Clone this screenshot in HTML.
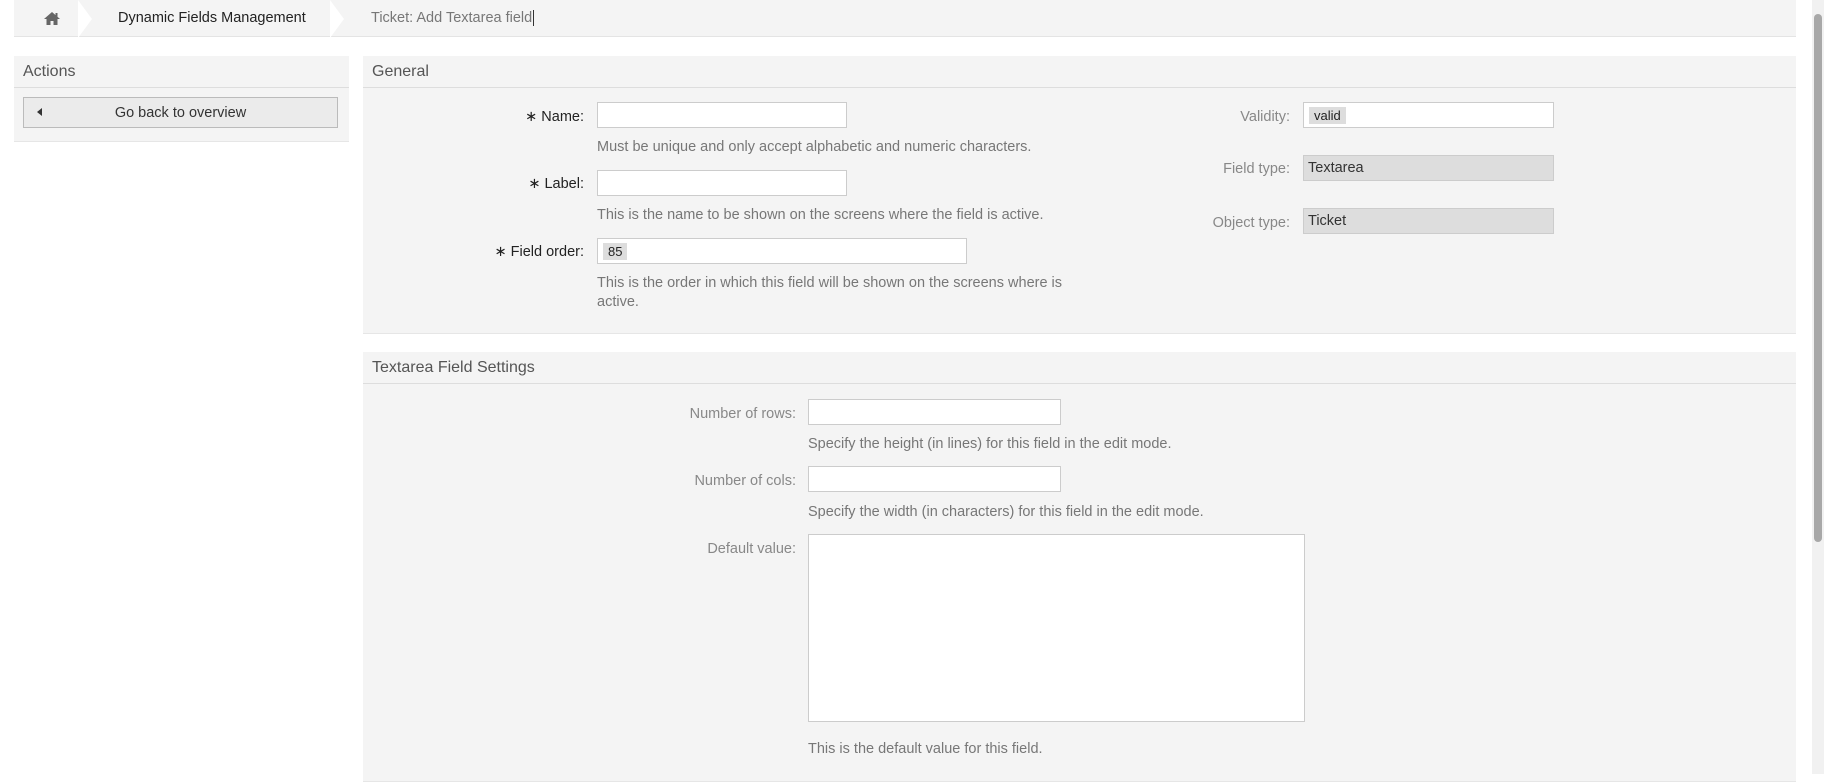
<!DOCTYPE html>
<html><head><meta charset="utf-8"><style>
*{box-sizing:border-box;margin:0;padding:0}
body{width:1824px;height:774px;overflow:hidden;background:#fff;font-family:"Liberation Sans",Arial,sans-serif;font-size:14.5px;color:#333;position:relative}
.abs{position:absolute}
.bc{left:14px;top:0;width:1782px;height:37px;background:#f4f4f4;border-bottom:1px solid #e4e4e4}
.chev{position:absolute;top:0;width:0;height:0;border-top:19px solid transparent;border-bottom:19px solid transparent;border-left:14px solid #fff}
.box{background:#f4f4f4;border-bottom:1px solid #e6e6e6}
.hd{position:absolute;left:0;right:0;top:0;height:32px;border-bottom:1px solid #ddd;font-size:16px;color:#555;padding:7px 9px}
.lbl{position:absolute;text-align:right;color:#888;font-size:14.5px;white-space:nowrap}
.req{color:#222}
.inp{position:absolute;background:#fff;border:1px solid #ccc;height:26px}
.ro{background:#ddd}
.help{position:absolute;color:#777;font-size:14.5px;line-height:19px}
.tag{position:absolute;left:5px;top:4px;background:#ddd;padding:1px 5px;font-size:13px;color:#222}
</style></head><body>
<div class="abs bc">
 <svg class="abs" style="left:29px;top:11px" width="18" height="15" viewBox="0 0 18 15"><path d="M9 1L1 8h2.5v6h4v-4h3v4h4V8H17z" fill="#666"/><rect x="12.5" y="2" width="2" height="4" fill="#666"/></svg>
 <div class="chev" style="left:64px"></div>
 <div class="abs" style="left:104px;top:10px;color:#222">Dynamic Fields Management</div>
 <div class="chev" style="left:316px"></div>
 <div class="abs" style="left:357px;top:10px;color:#777">Ticket: Add Textarea field<span style="border-left:1px solid #333;margin-left:1px"></span></div>
</div>
<div class="abs" style="left:1812px;top:0;width:12px;height:774px;background:#f1f1f1"><div style="margin:14px 2px;width:8px;height:528px;background:#a8a8a8;border-radius:4px"></div></div>

<div class="abs box" style="left:14px;top:56px;width:335px;height:86px">
 <div class="hd">Actions</div>
 <div class="abs" style="left:9px;top:41px;width:315px;height:31px;background:#ebebeb;border:1px solid #bbb;text-align:center;padding-top:7px;color:#333">Go back to overview</div>
 <div class="abs" style="left:23px;top:52px;width:0;height:0;border-top:4px solid transparent;border-bottom:4px solid transparent;border-right:5px solid #333"></div>
</div>

<div class="abs box" style="left:363px;top:56px;width:1433px;height:278px">
 <div class="hd">General</div>
 <div class="lbl req" style="right:1212px;top:53px">&#x2217; Name:</div>
 <div class="inp" style="left:234px;top:46px;width:250px"></div>
 <div class="help" style="left:234px;top:82px">Must be unique and only accept alphabetic and numeric characters.</div>
 <div class="lbl req" style="right:1212px;top:120px">&#x2217; Label:</div>
 <div class="inp" style="left:234px;top:114px;width:250px"></div>
 <div class="help" style="left:234px;top:150px">This is the name to be shown on the screens where the field is active.</div>
 <div class="lbl req" style="right:1212px;top:188px">&#x2217; Field order:</div>
 <div class="inp" style="left:234px;top:182px;width:370px"><span class="tag">85</span></div>
 <div class="help" style="left:234px;top:218px;width:484px">This is the order in which this field will be shown on the screens where is active.</div>
</div>
<div class="lbl" style="left:1150px;width:140px;top:109px">Validity:</div>
<div class="inp" style="left:1303px;top:102px;width:251px"><span class="tag" style="top:4px">valid</span></div>
<div class="lbl" style="left:1150px;width:140px;top:161px">Field type:</div>
<div class="inp ro" style="left:1303px;top:155px;width:251px;padding:4px 4px;color:#333">Textarea</div>
<div class="lbl" style="left:1150px;width:140px;top:215px">Object type:</div>
<div class="inp ro" style="left:1303px;top:208px;width:251px;padding:4px 4px;color:#333">Ticket</div>

<div class="abs box" style="left:363px;top:352px;width:1433px;height:430px">
 <div class="hd">Textarea Field Settings</div>
 <div class="lbl" style="left:0;width:433px;top:54px">Number of rows:</div>
 <div class="inp" style="left:445px;top:47px;width:253px"></div>
 <div class="help" style="left:445px;top:83px">Specify the height (in lines) for this field in the edit mode.</div>
 <div class="lbl" style="left:0;width:433px;top:121px">Number of cols:</div>
 <div class="inp" style="left:445px;top:114px;width:253px"></div>
 <div class="help" style="left:445px;top:151px">Specify the width (in characters) for this field in the edit mode.</div>
 <div class="lbl" style="left:0;width:433px;top:189px">Default value:</div>
 <div class="inp" style="left:445px;top:182px;width:497px;height:188px"></div>
 <div class="help" style="left:445px;top:388px">This is the default value for this field.</div>
</div>
</body></html>
